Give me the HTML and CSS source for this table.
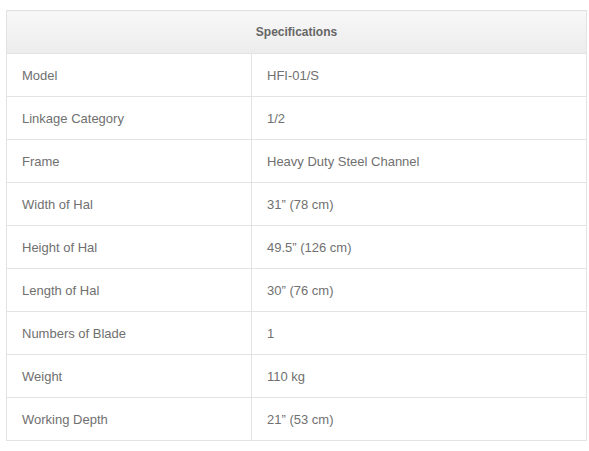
FILE: index.html
```html
<!DOCTYPE html>
<html>
<head>
<meta charset="utf-8">
<link rel="stylesheet" href="styles.css">
</head>
<body>
<table class="specs">
  <colgroup>
    <col class="col-label">
    <col class="col-value">
  </colgroup>
  <thead>
    <tr><th colspan="2">Specifications</th></tr>
  </thead>
  <tbody>
    <tr><td>Model</td><td>HFI-01/S</td></tr>
    <tr><td>Linkage Category</td><td>1/2</td></tr>
    <tr><td>Frame</td><td>Heavy Duty Steel Channel</td></tr>
    <tr><td>Width of Hal</td><td>31” (78 cm)</td></tr>
    <tr><td>Height of Hal</td><td>49.5” (126 cm)</td></tr>
    <tr><td>Length of Hal</td><td>30” (76 cm)</td></tr>
    <tr><td>Numbers of Blade</td><td>1</td></tr>
    <tr><td>Weight</td><td>110 kg</td></tr>
    <tr><td>Working Depth</td><td>21” (53 cm)</td></tr>
  </tbody>
</table>
</body>
</html>
```
FILE: styles.css
```css
html, body {
  margin: 0;
  background: #ffffff;
}
body {
  padding: 10px 0 0 6px;
  font-family: "Liberation Sans", Arial, sans-serif;
}
.specs {
  border-collapse: collapse;
  width: 581px;
  table-layout: fixed;
}
.col-label {
  width: 245px;
}
.specs th,
.specs td {
  border: 1px solid #e3e3e3;
  height: 43px;
  padding: 0 15px;
  box-sizing: border-box;
  vertical-align: middle;
}
.specs th {
  background: linear-gradient(to bottom, #f8f8f8, #ececec);
  color: #666666;
  font-size: 12px;
  font-weight: bold;
  text-align: center;
}
.specs td {
  color: #707070;
  font-size: 13px;
  text-align: left;
}
```
